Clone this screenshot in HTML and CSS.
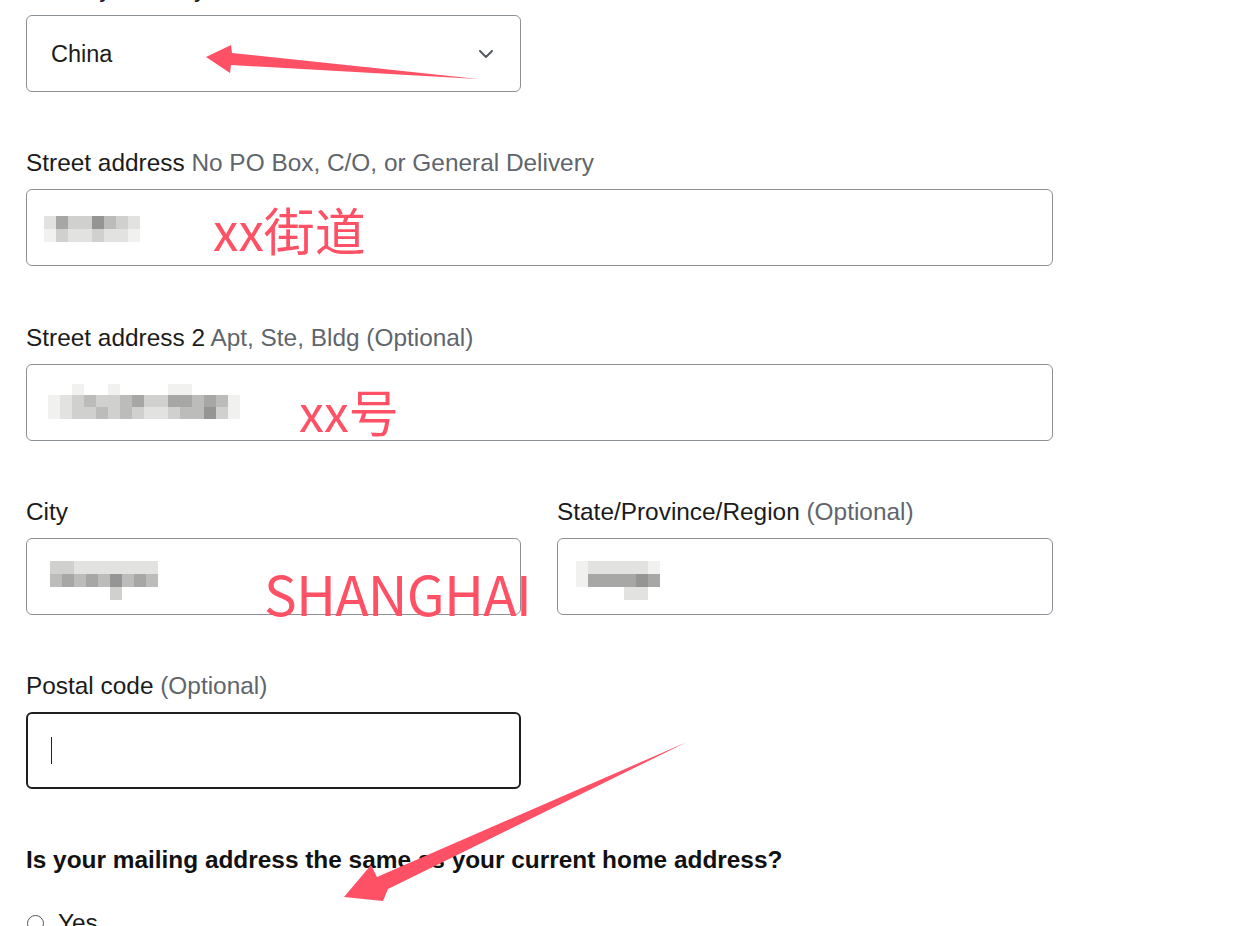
FILE: index.html
```html
<!DOCTYPE html>
<html lang="en">
<head>
<meta charset="utf-8">
<title>Address form</title>
<link rel="stylesheet" href="styles.css">
</head>
<body>
<div class="page">
  <form class="form">
    <div class="field half">
      <label class="label">Country/Territory</label>
      <div class="control select">
        <span class="value">China</span>
        <svg class="chevron" width="14" height="8" viewBox="0 0 14 8"><path d="M1 1 L7 7 L13 1" fill="none" stroke="#555b61" stroke-width="2" stroke-linecap="round" stroke-linejoin="round"/></svg>
      </div>
    </div>

    <div class="field wide-gap">
      <label class="label">Street address <span class="hint">No PO Box, C/O, or General Delivery</span></label>
      <div class="control">
        <div class="mosaic m-street">
          <i class="s1"></i><i class="s4"></i><i class="s2"></i><i class="s2"></i><i class="s5"></i><i class="s3"></i><i class="s2"></i><i class="s1"></i>
          <i class="s0"></i><i class="s2"></i><i class="s1"></i><i class="s1"></i><i class="s2"></i><i class="s1"></i><i class="s1"></i><i class="s0"></i>
        </div>
      </div>
    </div>

    <div class="field">
      <label class="label">Street address 2 <span class="hint">Apt, Ste, Bldg (Optional)</span></label>
      <div class="control">
        <div class="mosaic m-street2">
          <i class="e"></i><i class="e"></i><i class="s0"></i><i class="e"></i><i class="e"></i><i class="s0"></i><i class="e"></i><i class="e"></i><i class="e"></i><i class="e"></i><i class="s0"></i><i class="s0"></i><i class="e"></i><i class="e"></i><i class="e"></i><i class="e"></i>
          <i class="s0"></i><i class="s1"></i><i class="s2"></i><i class="s3"></i><i class="s2"></i><i class="s2"></i><i class="s3"></i><i class="s4"></i><i class="s2"></i><i class="s2"></i><i class="s4"></i><i class="s4"></i><i class="s3"></i><i class="s4"></i><i class="s3"></i><i class="s0"></i>
          <i class="s0"></i><i class="s1"></i><i class="s2"></i><i class="s2"></i><i class="s3"></i><i class="s2"></i><i class="s3"></i><i class="s2"></i><i class="s1"></i><i class="s1"></i><i class="s2"></i><i class="s3"></i><i class="s3"></i><i class="s5"></i><i class="s2"></i><i class="s0"></i>
        </div>
      </div>
    </div>

    <div class="row">
      <div class="field">
        <label class="label">City</label>
        <div class="control">
          <div class="mosaic m-city">
            <i class="s2"></i><i class="s2"></i><i class="s1"></i><i class="s1"></i><i class="s1"></i><i class="s1"></i><i class="s1"></i><i class="s1"></i><i class="s1"></i>
            <i class="s3"></i><i class="s4"></i><i class="s3"></i><i class="s4"></i><i class="s3"></i><i class="s5"></i><i class="s3"></i><i class="s4"></i><i class="s3"></i>
            <i class="e"></i><i class="e"></i><i class="e"></i><i class="e"></i><i class="e"></i><i class="s2"></i><i class="e"></i><i class="e"></i><i class="e"></i>
          </div>
        </div>
      </div>
      <div class="field">
        <label class="label">State/Province/Region <span class="hint">(Optional)</span></label>
        <div class="control">
          <div class="mosaic m-state">
            <i class="s0"></i><i class="s1"></i><i class="s1"></i><i class="s1"></i><i class="s1"></i><i class="s1"></i><i class="s0"></i>
            <i class="s0"></i><i class="s4"></i><i class="s4"></i><i class="s4"></i><i class="s4"></i><i class="s5"></i><i class="s4"></i>
            <i class="e"></i><i class="e"></i><i class="e"></i><i class="e"></i><i class="s1"></i><i class="s1"></i><i class="e"></i>
          </div>
        </div>
      </div>
    </div>

    <div class="field half">
      <label class="label">Postal code <span class="hint">(Optional)</span></label>
      <div class="control focused">
        <span class="caret"></span>
      </div>
    </div>

    <h3 class="question">Is your mailing address the same as your current home address?</h3>
    <div class="radio-row">
      <span class="radio"></span>
      <span class="radio-label">Yes</span>
    </div>
  </form>

  <div class="note note-street">xx街道</div>
  <div class="note note-street2">xx号</div>
  <div class="note note-city">SHANGHAI</div>

  <svg class="arrows" width="1233" height="926" viewBox="0 0 1233 926">
    <polygon points="206,57 231,45 232,53 478,79 231,65 230,73" fill="#fe5166"/>
    <polygon points="344,897 371,865 377,877 687,742 388,889 383,901" fill="#fe5166"/>
  </svg>
</div>
</body>
</html>
```

FILE: styles.css
```css
html, body {
  margin: 0;
  padding: 0;
  background: #ffffff;
}

body {
  font-family: "Liberation Sans", Arial, sans-serif;
  color: #1b1b1b;
  overflow: hidden;
}

.page {
  position: relative;
  width: 1233px;
  height: 926px;
  overflow: hidden;
}

.form {
  width: 1027px;
  margin-top: -26px;
  padding-left: 26px;
}

.field {
  display: flex;
  flex-direction: column;
  margin-bottom: 56px;
}

.field.wide-gap {
  margin-bottom: 57px;
}

.field.half {
  width: 495px;
}

.label {
  display: block;
  font-size: 24.4px;
  line-height: 30px;
  color: #1b1b1b;
}

.hint {
  color: #5f656b;
}

.control {
  box-sizing: border-box;
  height: 77px;
  margin-top: 11px;
  border: 1px solid #8c9196;
  border-radius: 6px;
  display: flex;
  align-items: center;
  padding: 0 24px 0 17px;
  background: #fff;
}

.select {
  justify-content: space-between;
  padding: 2px 27px 0 24px;
}

.value {
  font-size: 23.5px;
  color: #1b1b1b;
}

.chevron {
  display: block;
  margin-top: -2px;
}

.focused {
  border: 2px solid #1f1f1f;
  padding-left: 23px;
}

.caret {
  display: block;
  width: 1px;
  height: 27px;
  background: #222;
}

.row {
  display: grid;
  grid-template-columns: 495px 496px;
  column-gap: 36px;
}

.mosaic {
  display: grid;
  grid-auto-rows: 13px;
}

.mosaic i {
  display: block;
}

.m-street {
  grid-template-columns: repeat(8, 12px);
  margin-top: 2px;
}

.m-street2 {
  grid-template-columns: repeat(16, 12px);
  grid-auto-rows: 11px 12px 12px;
  margin-left: 4px;
  margin-top: -2px;
}

.m-city {
  grid-template-columns: repeat(9, 12px);
  margin-left: 6px;
  margin-top: 8px;
}

.m-state {
  grid-template-columns: repeat(7, 12px);
  margin-left: 1px;
  margin-top: 8px;
}

.s0 { background: #f1f1f0; }
.s1 { background: #e2e2e1; }
.s2 { background: #d0d0cf; }
.s3 { background: #bcbcbb; }
.s4 { background: #a7a7a6; }
.s5 { background: #959595; }
.e { background: transparent; }

.question {
  margin: 2px 0 0;
  font-size: 24.4px;
  line-height: 30px;
  font-weight: bold;
  color: #111;
}

.radio-row {
  display: flex;
  align-items: center;
  gap: 14px;
  margin-top: 33px;
  padding-left: 1px;
}

.radio {
  box-sizing: border-box;
  width: 17px;
  height: 17px;
  border: 1px solid #555;
  border-radius: 50%;
}

.radio-label {
  font-size: 24.4px;
  line-height: 30px;
}

.note {
  position: absolute;
  color: #fe5166;
  font-family: "Noto Sans CJK SC", "Noto Sans", sans-serif;
  line-height: 1;
  white-space: nowrap;
}

.note-street {
  left: 213px;
  top: 204px;
  font-size: 51px;
}

.note-street2 {
  left: 299px;
  top: 385px;
  font-size: 50px;
}

.note-city {
  left: 264px;
  top: 565px;
  font-size: 55px;
  letter-spacing: -0.8px;
}

.arrows {
  position: absolute;
  left: 0;
  top: 0;
  pointer-events: none;
}
```
